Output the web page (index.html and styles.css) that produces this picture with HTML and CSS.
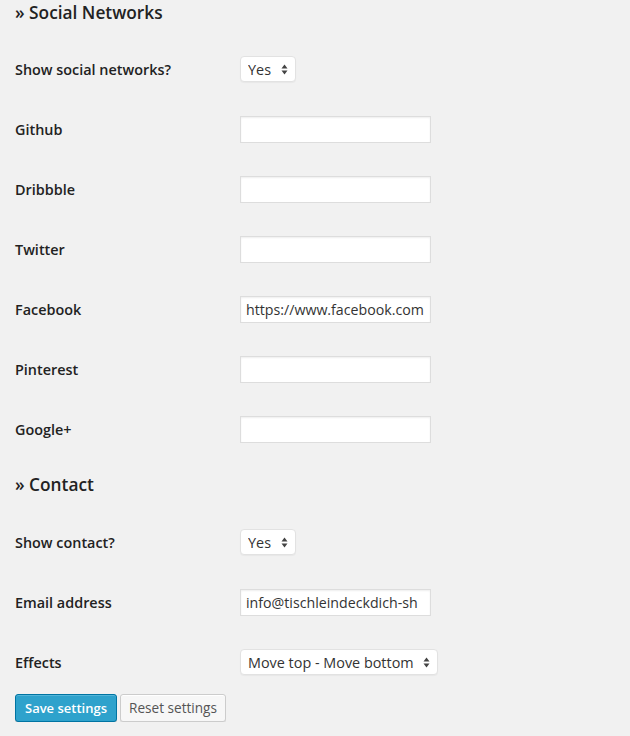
FILE: index.html
```html
<!DOCTYPE html>
<html>
<head>
<meta charset="utf-8">
<link rel="stylesheet" href="styles.css">
</head>
<body>
<form class="settings">
  <h3 class="section-title">» Social Networks</h3>
  <div class="rows">
    <div class="row"><label class="label">Show social networks?</label>
      <select class="select select-small"><option>Yes</option><option>No</option></select></div>
    <div class="row"><label class="label">Github</label><input class="text" type="text" value=""></div>
    <div class="row"><label class="label">Dribbble</label><input class="text" type="text" value=""></div>
    <div class="row"><label class="label">Twitter</label><input class="text" type="text" value=""></div>
    <div class="row"><label class="label">Facebook</label><input class="text" type="text" value="https://www.facebook.com"></div>
    <div class="row"><label class="label">Pinterest</label><input class="text" type="text" value=""></div>
    <div class="row"><label class="label">Google+</label><input class="text" type="text" value=""></div>
  </div>
  <h3 class="section-title second">» Contact</h3>
  <div class="rows">
    <div class="row"><label class="label">Show contact?</label>
      <select class="select select-small"><option>Yes</option><option>No</option></select></div>
    <div class="row"><label class="label">Email address</label><input class="text" type="text" value="info@tischleindeckdich-sh"></div>
    <div class="row"><label class="label">Effects</label>
      <select class="select select-wide"><option>Move top - Move bottom</option></select></div>
  </div>
  <div class="actions">
    <button type="button" class="btn btn-primary">Save settings</button>
    <button type="button" class="btn btn-secondary">Reset settings</button>
  </div>
</form>
</body>
</html>
```
FILE: styles.css
```css
html, body {
  margin: 0;
  padding: 0;
  background: #f1f1f1;
}
body {
  font-family: "Open Sans", "Liberation Sans", sans-serif;
  color: #222;
  font-size: 14px;
}
.settings {
  padding: 0 15px;
}
.section-title {
  margin: 0 0 13px 0;
  font-size: 17.3px;
  font-weight: 600;
  line-height: 26px;
  color: #222;
}
.section-title.second {
  margin-top: 13px;
  margin-bottom: 14px;
}
.rows {
  display: flex;
  flex-direction: column;
}
.row {
  display: flex;
  align-items: center;
  height: 60px;
}
.label {
  width: 225px;
  font-size: 14.4px;
  font-weight: 600;
  color: #222;
}
.text {
  box-sizing: border-box;
  width: 191px;
  height: 27px;
  margin: 0;
  padding: 0 4px 0 5px;
  border: 1px solid #ddd;
  background: #fff;
  box-shadow: inset 0 1px 2px rgba(0,0,0,0.07);
  font-family: "Open Sans", "Liberation Sans", sans-serif;
  font-size: 14.2px;
  color: #333;
  outline: none;
}
.select {
  box-sizing: border-box;
  -webkit-appearance: none;
  appearance: none;
  height: 26px;
  margin: 0;
  padding: 0 0 0 7px;
  border: 1px solid #e2e2e2;
  border-radius: 4px;
  background-color: #fff;
  background-image: url("data:image/svg+xml;utf8,<svg xmlns='http://www.w3.org/2000/svg' width='7' height='11' viewBox='0 0 7 11'><path d='M3.5 0.5 L6.5 4.5 L0.5 4.5 Z M3.5 10.5 L6.5 6.5 L0.5 6.5 Z' fill='%23444'/></svg>");
  background-repeat: no-repeat;
  background-position: right 7px center;
  box-shadow: 0 1px 1px rgba(0,0,0,0.04);
  font-family: "Open Sans", "Liberation Sans", sans-serif;
  font-size: 14.4px;
  color: #333;
  outline: none;
}
.select-small {
  width: 56px;
}
.select-wide {
  width: 198px;
}
.actions {
  display: flex;
  gap: 3px;
  margin-top: 2px;
}
.btn {
  box-sizing: border-box;
  height: 28px;
  padding: 0;
  border-radius: 3px;
  font-family: "Open Sans", "Liberation Sans", sans-serif;
  font-size: 13px;
  line-height: 26px;
  white-space: nowrap;
  text-align: center;
  cursor: pointer;
}
.btn-primary {
  width: 102px;
  background: #2ea2cc;
  border: 1px solid #0074a2;
  color: #fff;
  font-weight: 600;
  box-shadow: inset 0 1px 0 rgba(120,200,230,0.5), 0 1px 0 rgba(0,0,0,0.15);
}
.btn-secondary {
  width: 106px;
  background: #f7f7f7;
  border: 1px solid #ccc;
  color: #555;
  font-size: 13.6px;
  box-shadow: inset 0 1px 0 #fff, 0 1px 0 rgba(0,0,0,0.08);
}
```
